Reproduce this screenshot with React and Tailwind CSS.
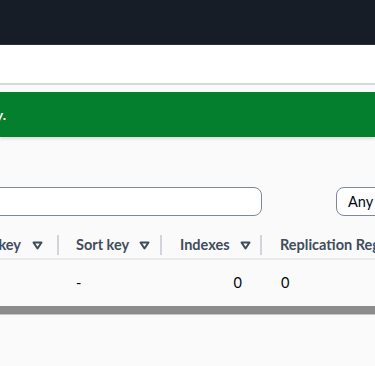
import React from "react";

function Caret() {
  return (
    <svg width="11" height="9" viewBox="0 0 11 9" className="shrink-0">
      <path d="M1.5 1.5 H9.5 L5.5 7.5 Z" fill="none" stroke="#414d5c" strokeWidth="2" strokeLinejoin="round" />
    </svg>
  );
}

function Sep() {
  return <div className="w-[2px] h-[20px] bg-[#d1d5db] shrink-0" />;
}

export default function App() {
  return (
    <div className="w-[375px] h-[366px] overflow-hidden bg-[#fafafa] font-['Lato',sans-serif] text-[#000716]">
      {/* top nav */}
      <div className="h-[45px] bg-[#161d26] border-b border-[#2a313b]" />
      {/* breadcrumbs bar */}
      <div className="h-[40px] bg-white border-b-2 border-[#d5dbdb]" />

      {/* flash */}
      <div className="pt-[7px]">
        <div className="h-[45px] bg-[#037f2e] flex items-center shadow-[0_2px_3px_rgba(0,7,22,0.12)]">
          <div className="w-[6px] flex justify-end">
            <span className="whitespace-nowrap text-white text-[14px] font-bold">
              The table was created successfully.
            </span>
          </div>
        </div>
      </div>

      {/* filter row */}
      <div className="mt-[50px] flex items-center">
        <div className="-ml-4 w-[278px] shrink-0 h-[29px] bg-white border border-[#7d8998] rounded-[8px]" />
        <div className="ml-[74px] w-[90px] shrink-0 h-[29px] bg-white border border-[#7d8998] rounded-[8px] flex items-center pl-[11px] text-[14.5px] whitespace-nowrap">
          Any value
        </div>
      </div>

      {/* table header */}
      <div className="mt-[16px] h-[28px] flex items-center border-b-2 border-[#e9ebed] text-[14.5px] font-bold text-[#414d5c] whitespace-nowrap">
        <div className="w-[57px] shrink-0 flex justify-end items-center pr-[14px] gap-[11px]">
          <span>Partition key</span>
          <Caret />
        </div>
        <Sep />
        <div className="w-[101px] shrink-0 flex items-center pl-[17px] gap-[10px]">
          <span>Sort key</span>
          <Caret />
        </div>
        <Sep />
        <div className="w-[98px] shrink-0 flex items-center pl-[18px] gap-[10px]">
          <span>Indexes</span>
          <Caret />
        </div>
        <Sep />
        <div className="pl-[18px]">Replication Regions</div>
      </div>

      {/* row */}
      <div className="h-[46px] flex items-center text-[14.5px] whitespace-nowrap">
        <div className="w-[59px] shrink-0" />
        <div className="w-[103px] shrink-0 pl-[17px]">-</div>
        <div className="w-[100px] shrink-0 flex justify-end pr-[20px]">0</div>
        <div className="pl-[19px]">0</div>
      </div>

      {/* scrollbar */}
      <div className="h-[9px] bg-[#8c8c8c] border-b border-[#c6c6cd]" />
    </div>
  );
}
